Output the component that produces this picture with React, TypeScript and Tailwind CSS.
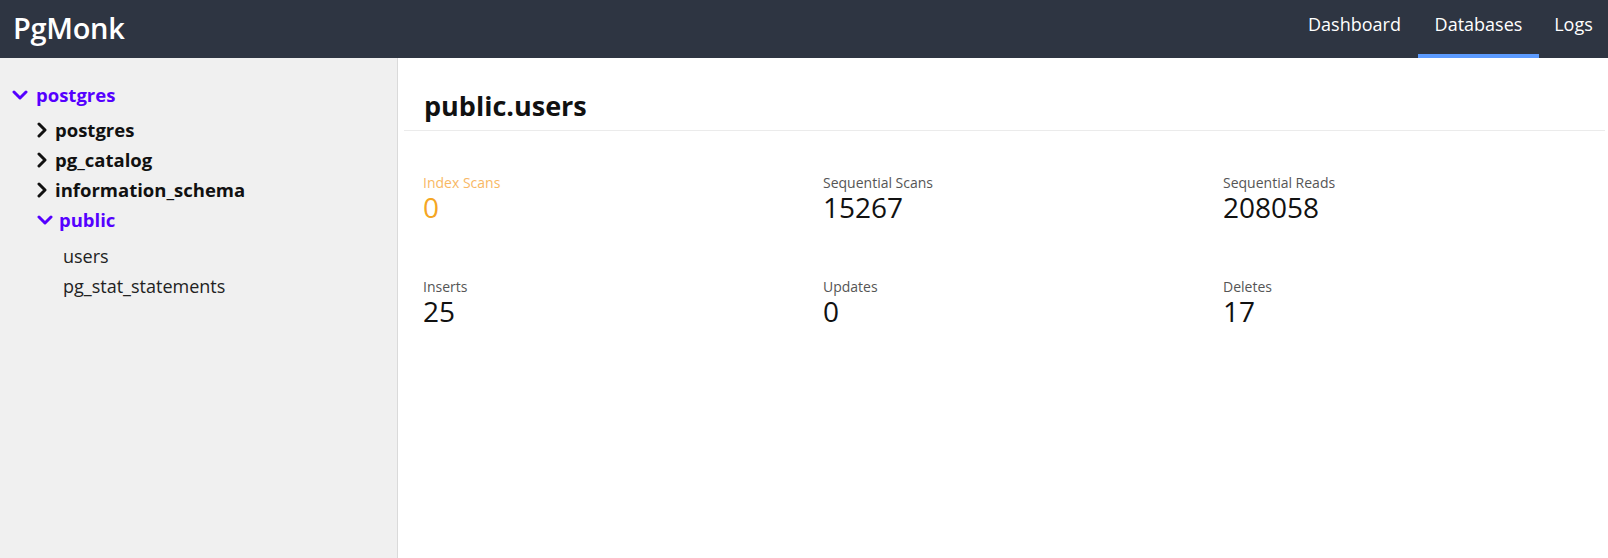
import React from 'react';

const font = { fontFamily: '"Open Sans", "Noto Sans", sans-serif' };

const ChevronRight = () => (
  <svg width="10" height="16" viewBox="0 0 10 16" className="shrink-0">
    <polyline points="2,2 8,8 2,14" fill="none" stroke="#111" strokeWidth="3" strokeLinecap="round" strokeLinejoin="round" />
  </svg>
);

const ChevronDown = ({ w = 16, h = 10 }: { w?: number; h?: number }) => (
  <svg width={w} height={h} viewBox={`0 0 ${w} ${h}`} className="shrink-0">
    <polyline points={`2,2 ${w / 2},${h - 2} ${w - 2},2`} fill="none" stroke="#5500ff" strokeWidth="3" strokeLinecap="round" strokeLinejoin="round" />
  </svg>
);

const stats = [
  { label: 'Index Scans', value: '0', warn: true },
  { label: 'Sequential Scans', value: '15267' },
  { label: 'Sequential Reads', value: '208058' },
  { label: 'Inserts', value: '25' },
  { label: 'Updates', value: '0' },
  { label: 'Deletes', value: '17' },
];

const schemas = ['postgres', 'pg_catalog', 'information_schema'];

export default function App() {
  return (
    <div className="w-[1608px] h-[558px] flex flex-col overflow-hidden bg-white" style={font}>
      <header className="h-[58px] bg-[#2e3542] flex items-stretch justify-between shrink-0">
        <div className="pl-[13px] pb-[2px] flex items-center text-white text-[29px] font-semibold tracking-[-0.3px]">PgMonk</div>
        <nav className="flex items-stretch text-white text-[18px]">
          <a className="w-[127px] flex items-center justify-center pb-[9px]">Dashboard</a>
          <a className="w-[121px] flex items-center justify-center border-b-4 border-[#5c9bff] pb-[5px]">Databases</a>
          <a className="w-[69px] flex items-center justify-center pb-[9px]">Logs</a>
        </nav>
      </header>

      <div className="flex flex-1 min-h-0">
        <aside className="w-[398px] shrink-0 bg-[#f0f0f0] border-r border-[#dadada] pt-[16px]">
          <div className="flex items-center h-[41px] pl-[12px] gap-[8px] text-[#5500ff] font-bold text-[18.5px]">
            <ChevronDown w={16} h={10} />
            <span>postgres</span>
          </div>
          <div className="pl-[37px]">
            {schemas.map((s) => (
              <div key={s} className="flex items-center h-[30px] gap-[8px] text-[#111] font-bold text-[18.5px]">
                <ChevronRight />
                <span>{s}</span>
              </div>
            ))}
            <div className="flex items-center h-[30px] gap-[6px] text-[#5500ff] font-bold text-[18.5px]">
              <ChevronDown />
              <span>public</span>
            </div>
            <div className="pl-[26px] pt-[6px] text-[#222] text-[18px]">
              <div className="h-[30px] flex items-center">users</div>
              <div className="h-[30px] flex items-center">pg_stat_statements</div>
            </div>
          </div>
        </aside>

        <main className="flex-1 pl-[6px] pr-[3px]">
          <div className="border-b border-[#ebebeb] h-[73px] flex items-end pb-[11px] pl-[20px]">
            <h1 className="text-[27px] font-bold text-[#111] leading-none">public.users</h1>
          </div>
          <div className="grid grid-cols-[400px_400px_400px] pt-[42px] gap-y-[55px]">
            {stats.map((s) => (
              <div key={s.label} className="pl-[19px]">
                <div className={`text-[14px] leading-[19px] ${s.warn ? 'text-[#f8b865]' : 'text-[#555]'}`}>{s.label}</div>
                <div className={`text-[28px] leading-[30px] ${s.warn ? 'text-[#f5a623]' : 'text-[#111]'}`}>{s.value}</div>
              </div>
            ))}
          </div>
        </main>
      </div>
    </div>
  );
}
